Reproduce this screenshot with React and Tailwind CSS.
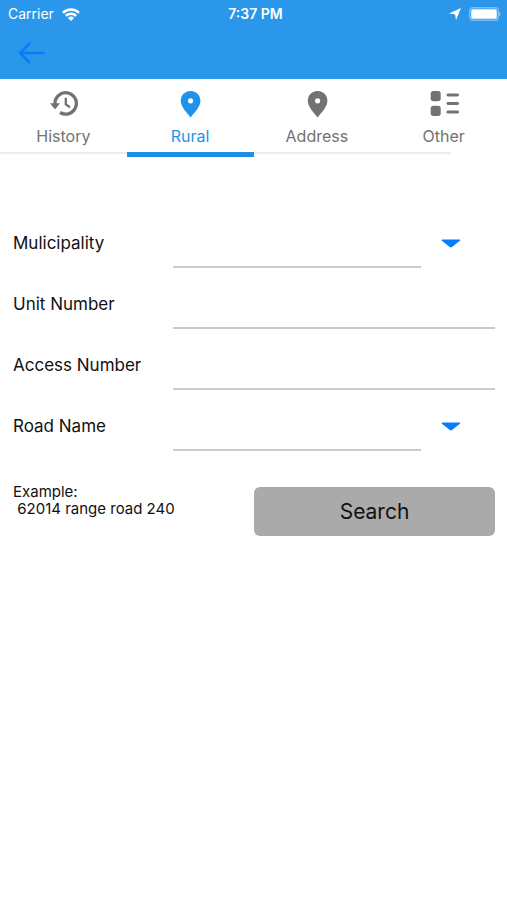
const tabs = [
  { id: 'history', label: 'History', Icon: HistoryIcon },
  { id: 'rural', label: 'Rural', Icon: PinIcon },
  { id: 'address', label: 'Address', Icon: PinIcon },
  { id: 'other', label: 'Other', Icon: ListIcon },
]

const fields = [
  { id: 'municipality', label: 'Mulicipality', select: true },
  { id: 'unit', label: 'Unit Number' },
  { id: 'access', label: 'Access Number' },
  { id: 'road', label: 'Road Name', select: true },
]

function HistoryIcon() {
  return (
    <svg viewBox="0 0 28 28" className="w-7 h-7 overflow-visible" fill="none" stroke="currentColor" strokeWidth="3.3">
      <path d="M6 14A10.7 10.7 0 1 1 11 22.5" />
      <path d="M1 13.3H11L6 19.4Z" fill="currentColor" stroke="none" />
      <path d="M16.8 7.8V14.4L21 17.2" strokeWidth="2.3" />
    </svg>
  )
}

function PinIcon() {
  return (
    <svg viewBox="0 0 28 28" className="w-7 h-7" fill="currentColor">
      <path
        fillRule="evenodd"
        d="M14.6 1C9 1 4.8 5.3 4.8 10.8C4.8 16.6 10 21.8 14.6 27.4C19.2 21.8 24.4 16.6 24.4 10.8C24.4 5.3 20.2 1 14.6 1ZM14.6 8.2A2.6 2.6 0 1 1 14.6 13.4A2.6 2.6 0 1 1 14.6 8.2Z"
      />
    </svg>
  )
}

function ListIcon() {
  return (
    <svg viewBox="0 0 30 28" className="w-[30px] h-7" fill="currentColor">
      <rect x="1.7" y="1" width="10" height="10.2" rx="2.7" />
      <rect x="1.7" y="15.8" width="10" height="10.2" rx="2.7" />
      <rect x="17.5" y="3.4" width="12.5" height="3" rx="1.4" />
      <rect x="17.5" y="12" width="12.5" height="3" rx="1.4" />
      <rect x="17.5" y="20.6" width="12.5" height="3" rx="1.4" />
    </svg>
  )
}

function StatusBar() {
  return (
    <div className="grid grid-cols-3 items-center h-7 pl-2 pr-1 text-sm text-white">
      <div className="flex items-center gap-2">
        <span>Carrier</span>
        <svg viewBox="0 0 18 13" className="w-[18px] h-[13px]" fill="none" stroke="white" strokeWidth="2.5">
          <path d="M1 4.8A11.5 11.5 0 0 1 17 4.8" />
          <path d="M3.8 7.9A7.4 7.4 0 0 1 14.2 7.9" />
          <path d="M9 13L5.9 9.9A4.4 4.4 0 0 1 12.1 9.9Z" fill="white" stroke="none" />
        </svg>
      </div>
      <span className="text-center font-semibold">7:37 PM</span>
      <div className="flex items-center justify-end gap-2 pr-0.5">
        <svg viewBox="0 0 12 12" className="w-3 h-3" fill="white">
          <path d="M12 0L7 12L6.1 6.4L0 5.6Z" />
        </svg>
        <svg viewBox="0 0 32 14" className="w-8 h-3.5" fill="white">
          <rect x="0.7" y="0.7" width="28.6" height="12.6" rx="3.2" fill="none" stroke="white" strokeOpacity="0.4" strokeWidth="1.4" />
          <rect x="2.2" y="2.2" width="25.6" height="9.6" rx="1.6" />
          <path d="M30.2 4.8C32 5.4 32 8.6 30.2 9.2Z" fillOpacity="0.5" />
        </svg>
      </div>
    </div>
  )
}

function Field({ field }) {
  return (
    <div className="flex h-[61px]">
      <label htmlFor={field.id} className="w-40 shrink-0 pt-6 text-[17px] leading-6">
        {field.label}
      </label>
      {field.select ? (
        <>
          <select
            id={field.id}
            className="flex-1 min-w-0 appearance-none bg-transparent border-b-2 border-[#cbcbcb] outline-none"
          />
          <svg viewBox="0 0 20 9" className="w-5 h-[9px] mt-8 ml-5 mr-[34px] text-[#087cf8]" fill="currentColor" aria-hidden="true">
            <path d="M1.2 0.5H18.6Q19.8 0.8 18.9 1.8L11 8Q9.9 8.9 8.8 8L0.9 1.8Q0 0.8 1.2 0.5Z" />
          </svg>
        </>
      ) : (
        <input
          id={field.id}
          type="text"
          className="flex-1 min-w-0 bg-transparent border-b-2 border-[#cbcbcb] outline-none"
        />
      )}
    </div>
  )
}

export default function App() {
  const active = 'rural'

  return (
    <div className="min-h-screen bg-white text-[#111] font-['Inter',sans-serif]">
      <header className="bg-[#2b97ea] h-[79px]">
        <StatusBar />
        <button type="button" aria-label="Back" className="block ml-[18px] mt-3.5 text-[#087cf8]">
          <svg viewBox="0 0 27 22" className="w-[27px] h-[22px]" fill="none" stroke="currentColor" strokeWidth="2.5">
            <path d="M12 1L2 11L12 21M2 11H26.5" />
          </svg>
        </button>
      </header>

      <nav className="grid grid-cols-4">
        {tabs.map(({ id, label, Icon }) => (
          <button
            key={id}
            type="button"
            className={
              id === active
                ? 'flex flex-col items-center h-[78px] pt-[11px] text-[#1f93ea]'
                : 'flex flex-col items-center h-[78px] pt-[11px] text-[#727272]'
            }
          >
            <Icon />
            <span className="mt-1.5 text-base leading-6">{label}</span>
            {id === active ? (
              <span className="w-full h-[5px] mt-1 bg-[#1f8fe6]" />
            ) : (
              <span className={id === 'other' ? 'w-full pr-14 mt-1' : 'w-full mt-1'}>
                <span className="block h-0.5 bg-[#ececec]" />
              </span>
            )}
          </button>
        ))}
      </nav>

      <form className="pt-[50px] pl-[13px] pr-3">
        {fields.map((field) => (
          <Field key={field.id} field={field} />
        ))}

        <div className="grid grid-cols-2 mt-8">
          <p className="text-[15px] leading-[17px] whitespace-pre">{'Example:\n 62014 range road 240'}</p>
          <button type="button" className="h-[49px] mt-1 rounded-md bg-[#aaaaaa] text-[21px]">
            Search
          </button>
        </div>
      </form>
    </div>
  )
}
